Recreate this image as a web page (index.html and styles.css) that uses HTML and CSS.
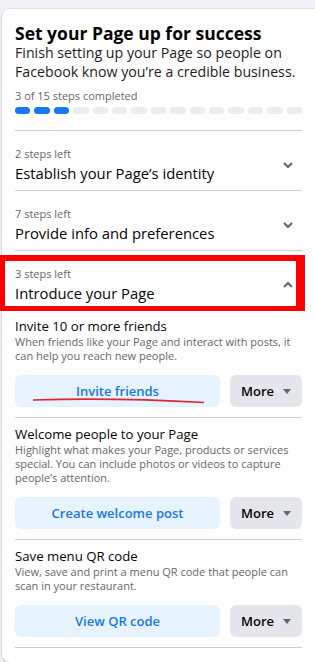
FILE: index.html
```html
<!DOCTYPE html>
<html lang="en">
  <head>
    <meta charset="UTF-8" />
    <meta name="viewport" content="width=device-width, initial-scale=1.0" />
    <title>Set your Page up for success</title>
    <link rel="stylesheet" href="styles.css">
  </head>
  <body>
    <div class="card">
      <div class="intro">
        <h2 class="intro-title">Set your Page up for success</h2>
        <p class="intro-text">Finish setting up your Page so people on<br>Facebook know you’re a credible business.</p>
        <div class="progress-label">3 of 15 steps completed</div>
        <div class="progress">
          <span class="seg done"></span><span class="seg done"></span><span class="seg done"></span>
          <span class="seg"></span><span class="seg"></span><span class="seg"></span><span class="seg"></span>
          <span class="seg"></span><span class="seg"></span><span class="seg"></span><span class="seg"></span>
          <span class="seg"></span><span class="seg"></span><span class="seg"></span><span class="seg"></span>
        </div>
      </div>

      <div class="group">
        <div class="group-head">
          <div>
            <div class="steps-left">2 steps left</div>
            <div class="group-title">Establish your Page’s identity</div>
          </div>
          <svg class="chevron" viewBox="0 0 12 12"><path d="M2 4 L6 8 L10 4" /></svg>
        </div>
      </div>

      <div class="group">
        <div class="group-head">
          <div>
            <div class="steps-left">7 steps left</div>
            <div class="group-title">Provide info and preferences</div>
          </div>
          <svg class="chevron" viewBox="0 0 12 12"><path d="M2 4 L6 8 L10 4" /></svg>
        </div>
      </div>

      <div class="group open">
        <div class="group-head">
          <div>
            <div class="steps-left">3 steps left</div>
            <div class="group-title">Introduce your Page</div>
          </div>
          <svg class="chevron" viewBox="0 0 12 12"><path d="M2 8 L6 4 L10 8" /></svg>
        </div>

        <div class="task">
          <div class="task-title">Invite 10 or more friends</div>
          <div class="task-text">When friends like your Page and interact with posts, it<br>can help you reach new people.</div>
          <div class="actions">
            <button class="btn btn-primary">Invite friends</button>
            <button class="btn btn-more">More <span class="caret"></span></button>
          </div>
        </div>

        <div class="task">
          <div class="task-title">Welcome people to your Page</div>
          <div class="task-text">Highlight what makes your Page, products or services<br>special. You can include photos or videos to capture<br>people’s attention.</div>
          <div class="actions">
            <button class="btn btn-primary">Create welcome post</button>
            <button class="btn btn-more">More <span class="caret"></span></button>
          </div>
        </div>

        <div class="task">
          <div class="task-title">Save menu QR code</div>
          <div class="task-text">View, save and print a menu QR code that people can<br>scan in your restaurant.</div>
          <div class="actions">
            <button class="btn btn-primary">View QR code</button>
            <button class="btn btn-more">More <span class="caret"></span></button>
          </div>
        </div>
      </div>

      <!-- annotations drawn over the screenshot -->
      <div class="highlight"></div>
      <svg class="scribble" viewBox="0 0 175 8"><path d="M2 3 C 50 1.5, 120 2.5, 173 5.5" /></svg>
    </div>
  </body>
</html>
```

FILE: styles.css
```css
* {
  margin: 0;
  padding: 0;
  box-sizing: border-box;
}
body {
  background: #f0f2f5;
  font-family: "Open Sans", "Noto Sans", sans-serif;
  color: #050505;
  overflow: hidden;
}
.card {
  position: relative;
  margin: 9px 0 0 2px;
  width: 313px;
  background: #fff;
  border-radius: 8px 0 0 8px;
  box-shadow: 0 0 0 1px rgba(0, 0, 0, 0.06), 0 1px 2px rgba(0, 0, 0, 0.15);
  padding: 13px 13px 14px 13px;
}
.intro {
  padding-bottom: 16px;
  border-bottom: 1px solid #ced0d4;
}
.intro-title {
  font-size: 17.5px;
  line-height: 22px;
  font-weight: 700;
}
.intro-text {
  font-size: 14.2px;
  line-height: 18.5px;
  color: #1c1e21;
}
.progress-label {
  margin-top: 7px;
  font-size: 11px;
  line-height: 16px;
  color: #65676b;
}
.progress {
  display: flex;
  gap: 4px;
  margin-top: 3px;
}
.seg {
  flex: 1;
  height: 7px;
  border-radius: 4px;
  background: #ebedf0;
}
.seg.done {
  background: #1877f2;
}
.group {
  border-bottom: 1px solid #ced0d4;
}
.group-head {
  display: flex;
  align-items: center;
  justify-content: space-between;
  padding: 15px 0 6px;
}
.steps-left {
  font-size: 11px;
  line-height: 16px;
  color: #65676b;
}
.group-title {
  font-size: 14.8px;
  line-height: 22px;
}
.chevron {
  width: 12px;
  height: 12px;
  margin-right: 8px;
  fill: none;
  stroke: #65676b;
  stroke-width: 2.2;
}
.group.open {
  border-bottom: none;
}
.task {
  padding: 7px 0 10px;
  border-bottom: 1px solid #ced0d4;
}
.task-title {
  font-size: 13.2px;
  line-height: 18px;
}
.task-text {
  font-size: 11px;
  line-height: 14px;
  color: #65676b;
}
.actions {
  display: flex;
  gap: 10px;
  margin-top: 12px;
}
.btn {
  height: 32px;
  border: none;
  border-radius: 6px;
  font-family: inherit;
  font-size: 13px;
  font-weight: 600;
}
.btn-primary {
  flex: 1;
  background: #e7f3ff;
  color: #1877f2;
}
.btn-more {
  width: 72px;
  background: #e4e6eb;
  color: #050505;
  display: flex;
  align-items: center;
  justify-content: center;
  gap: 9px;
}
.caret {
  width: 0;
  height: 0;
  border-left: 4.5px solid transparent;
  border-right: 4.5px solid transparent;
  border-top: 5px solid #65676b;
}
.highlight {
  position: absolute;
  left: -2px;
  top: 246px;
  width: 305px;
  height: 56px;
  border-style: solid;
  border-color: #ff0000;
  border-width: 6px 9px 5px 5px;
}
.scribble {
  position: absolute;
  left: 29px;
  top: 388px;
  width: 175px;
  height: 8px;
  fill: none;
  stroke: #e3262a;
  stroke-width: 1.6;
}
```
